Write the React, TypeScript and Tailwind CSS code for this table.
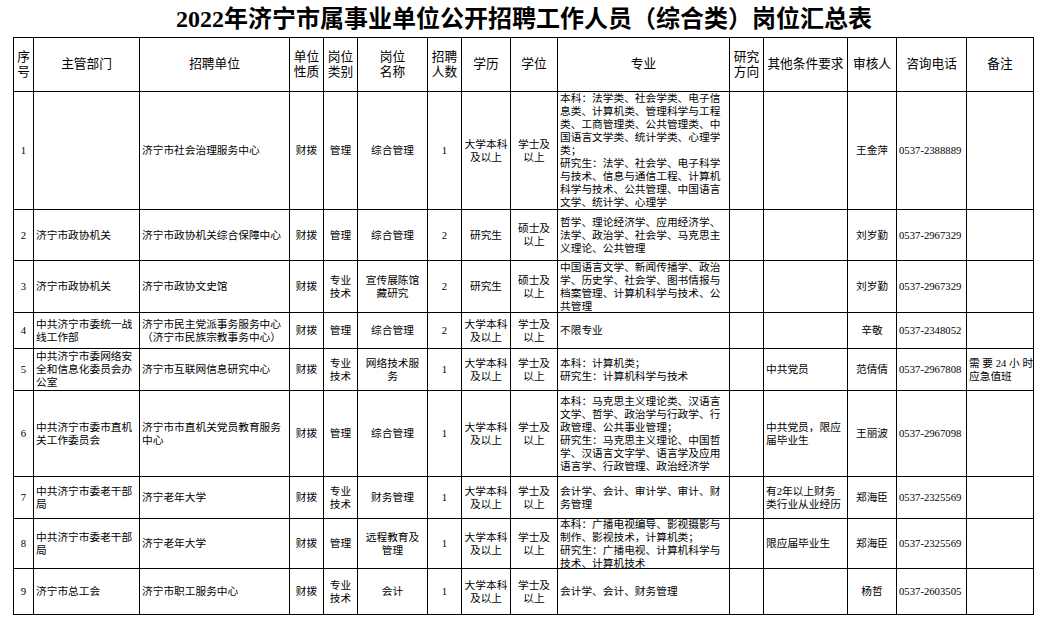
import React from 'react';

// 列对齐方式：c 居中，l 靠左
const align = ['c', 'l', 'l', 'c', 'c', 'c', 'c', 'c', 'c', 'l', 'c', 'l', 'c', 'l', 'l'];

const header = [
  '序\n号',
  '主管部门',
  '招聘单位',
  '单位\n性质',
  '岗位\n类别',
  '岗位\n名称',
  '招聘\n人数',
  '学历',
  '学位',
  '专业',
  '研究\n方向',
  '其他条件要求',
  '审核人',
  '咨询电话',
  '备注',
];

const rows: string[][] = [
  [
    '1',
    '',
    '济宁市社会治理服务中心',
    '财拨',
    '管理',
    '综合管理',
    '1',
    '大学本科\n及以上',
    '学士及\n以上',
    '本科：法学类、社会学类、电子信\n息类、计算机类、管理科学与工程\n类、工商管理类、公共管理类、中\n国语言文学类、统计学类、心理学\n类；\n研究生：法学、社会学、电子科学\n与技术、信息与通信工程、计算机\n科学与技术、公共管理、中国语言\n文学、统计学、心理学',
    '',
    '',
    '王金萍',
    '0537-2388889',
    '',
  ],
  [
    '2',
    '济宁市政协机关',
    '济宁市政协机关综合保障中心',
    '财拨',
    '管理',
    '综合管理',
    '2',
    '研究生',
    '硕士及\n以上',
    '哲学、理论经济学、应用经济学、\n法学、政治学、社会学、马克思主\n义理论、公共管理',
    '',
    '',
    '刘岁勤',
    '0537-2967329',
    '',
  ],
  [
    '3',
    '济宁市政协机关',
    '济宁市政协文史馆',
    '财拨',
    '专业\n技术',
    '宣传展陈馆\n藏研究',
    '2',
    '研究生',
    '硕士及\n以上',
    '中国语言文学、新闻传播学、政治\n学、历史学、社会学、图书情报与\n档案管理、计算机科学与技术、公\n共管理',
    '',
    '',
    '刘岁勤',
    '0537-2967329',
    '',
  ],
  [
    '4',
    '中共济宁市委统一战\n线工作部',
    '济宁市民主党派事务服务中心\n（济宁市民族宗教事务中心）',
    '财拨',
    '管理',
    '综合管理',
    '2',
    '大学本科\n及以上',
    '学士及\n以上',
    '不限专业',
    '',
    '',
    '辛敬',
    '0537-2348052',
    '',
  ],
  [
    '5',
    '中共济宁市委网络安\n全和信息化委员会办\n公室',
    '济宁市互联网信息研究中心',
    '财拨',
    '专业\n技术',
    '网络技术服\n务',
    '1',
    '大学本科\n及以上',
    '学士及\n以上',
    '本科：计算机类；\n研究生：计算机科学与技术',
    '',
    '中共党员',
    '范倩倩',
    '0537-2967808',
    '需 要 24 小 时\n应急值班',
  ],
  [
    '6',
    '中共济宁市委市直机\n关工作委员会',
    '济宁市市直机关党员教育服务\n中心',
    '财拨',
    '管理',
    '综合管理',
    '1',
    '大学本科\n及以上',
    '学士及\n以上',
    '本科：马克思主义理论类、汉语言\n文学、哲学、政治学与行政学、行\n政管理、公共事业管理；\n研究生：马克思主义理论、中国哲\n学、汉语言文字学、语言学及应用\n语言学、行政管理、政治经济学',
    '',
    '中共党员，限应\n届毕业生',
    '王丽波',
    '0537-2967098',
    '',
  ],
  [
    '7',
    '中共济宁市委老干部\n局',
    '济宁老年大学',
    '财拨',
    '专业\n技术',
    '财务管理',
    '1',
    '大学本科\n及以上',
    '学士及\n以上',
    '会计学、会计、审计学、审计、财\n务管理',
    '',
    '有2年以上财务\n类行业从业经历',
    '郑海臣',
    '0537-2325569',
    '',
  ],
  [
    '8',
    '中共济宁市委老干部\n局',
    '济宁老年大学',
    '财拨',
    '管理',
    '远程教育及\n管理',
    '1',
    '大学本科\n及以上',
    '学士及\n以上',
    '本科：广播电视编导、影视摄影与\n制作、影视技术，计算机类；\n研究生：广播电视、计算机科学与\n技术、计算机技术',
    '',
    '限应届毕业生',
    '郑海臣',
    '0537-2325569',
    '',
  ],
  [
    '9',
    '济宁市总工会',
    '济宁市职工服务中心',
    '财拨',
    '专业\n技术',
    '会计',
    '1',
    '大学本科\n及以上',
    '学士及\n以上',
    '会计学、会计、财务管理',
    '',
    '',
    '杨哲',
    '0537-2603505',
    '',
  ],
];

function Cell({ text, a, head }: { text: string; a: string; head?: boolean }) {
  const pos = a === 'c' ? 'justify-center text-center' : 'justify-start text-left pl-[2px]';
  const size = head ? 'text-[12.7px] leading-[15px]' : 'text-[10.7px] leading-[13px]';
  return (
    <div className={`flex items-center overflow-hidden border-r border-b border-black ${pos}`}>
      <span className={`whitespace-pre ${size}`}>{text}</span>
    </div>
  );
}

export default function App() {
  return (
    <div
      className="w-[1060px] h-[621px] bg-white text-black overflow-hidden"
      style={{ fontFamily: '"Liberation Serif", "Noto Sans CJK SC", serif' }}
    >
      <div className="h-[37px] flex items-center justify-center pr-[12px]">
        <h1 className="text-[24px] leading-none font-bold">
          2022年济宁市属事业单位公开招聘工作人员（综合类）岗位汇总表
        </h1>
      </div>
      <div className="ml-[13px] w-[1021px] grid grid-cols-[20px_106px_150px_34px_34px_70px_34px_49px_47px_172px_34px_84px_49px_70px_67px] grid-rows-[54px_118px_51px_52px_36px_42px_86px_42px_50px_46px] border-l border-t border-black">
        {header.map((h, i) => (
          <Cell key={'h' + i} text={h} a="c" head />
        ))}
        {rows.map((r, ri) =>
          r.map((t, ci) => <Cell key={ri + '-' + ci} text={t} a={align[ci]} />)
        )}
      </div>
    </div>
  );
}
